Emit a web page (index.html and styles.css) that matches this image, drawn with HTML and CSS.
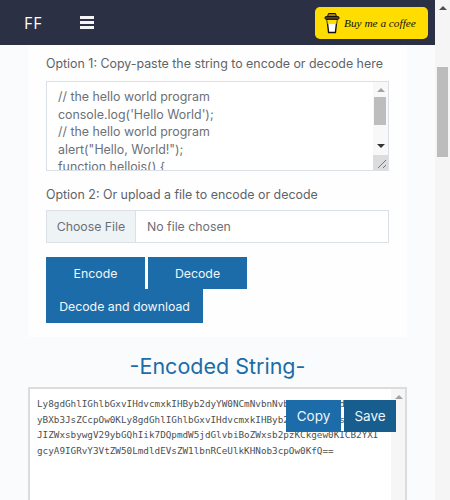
FILE: index.html
```html
<!DOCTYPE html>
<html lang="en">
<head>
  <meta charset="UTF-8" />
  <meta name="viewport" content="width=device-width, initial-scale=1">
  <title>Base64 Encode and Decode</title>
  <link rel="stylesheet" href="styles.css">
</head>
<body>
  <div class="window">
    <div class="page">
      <header>
        <div class="header-left">
          <div class="logo">FF</div>
          <div class="burger"><span></span><span></span><span></span></div>
        </div>
        <a class="coffee">
          <svg class="cup" width="16" height="22" viewBox="0 0 16 22">
            <path d="M3 7 L4.6 20.5 H11.4 L13 7 Z" fill="#fff" stroke="#111" stroke-width="1.4"/>
            <path d="M3.2 8 L3.7 12 H12.3 L12.8 8 Z" fill="#ffdd00"/>
            <rect x="1" y="4.6" width="14" height="2.6" rx="1" fill="#6b4a10" stroke="#111" stroke-width="1"/>
            <path d="M3.5 4.5 L4.5 1.5 H11.5 L12.5 4.5 Z" fill="#a8801a" stroke="#111" stroke-width="1"/>
          </svg>
          <span>Buy me a coffee</span>
        </a>
      </header>

      <section class="card">
        <label class="field-label">Option 1: Copy-paste the string to encode or decode here</label>
        <div class="input-box">
          <textarea class="source" spellcheck="false">// the hello world program
console.log('Hello World');
// the hello world program
alert("Hello, World!");
function hellois() {</textarea>
          <div class="scroll small">
            <i class="arrow up"></i>
            <b class="thumb"></b>
            <i class="arrow down"></i>
            <svg class="grip" width="15" height="15" viewBox="0 0 15 15">
              <path d="M5 13 L13 5 M10 13 L13 10" stroke="#777" fill="none"/>
            </svg>
          </div>
        </div>

        <label class="field-label second">Option 2: Or upload a file to encode or decode</label>
        <input class="file" type="file">

        <div class="actions">
          <button class="wide">Encode</button>
          <button class="wide">Decode</button>
          <button>Decode and download</button>
        </div>
      </section>

      <section class="result">
        <h2>-Encoded String-</h2>
        <div class="output">
          <div class="output-text">Ly8gdGhlIGhlbGxvIHdvcmxkIHByb2dyYW0NCmNvbnNvbGUubG9nKCdIZWxsb<br>yBXb3JsZCcpOw0KLy8gdGhlIGhlbGxvIHdvcmxkIHByb2dyYW0NCmFsZXJ0KC<br>JIZWxsbywgV29ybGQhIik7DQpmdW5jdGlvbiBoZWxsb2pzKCkgew0KICB2YXI<br>gcyA9IGRvY3VtZW50LmdldEVsZW1lbnRCeUlkKHNob3cpOw0KfQ==</div>
          <div class="scroll big"><i class="arrow up"></i></div>
          <div class="output-buttons">
            <button class="copy">Copy</button>
            <button class="save">Save</button>
          </div>
        </div>
      </section>
    </div>

    <div class="page-scroll">
      <i class="arrow up"></i>
      <b class="page-thumb"></b>
    </div>
  </div>
</body>
</html>
```
FILE: styles.css
```css
:root {
  --navy: #2b3044;
  --blue: #1b6ca8;
  --blue-dark: #175d8e;
  --text: #666a70;
  --line: #dbe0e6;
}

* {
  box-sizing: border-box;
}

html,
body {
  height: 100%;
  overflow: hidden;
}

body {
  margin: 0;
  font-family: 'Inter', 'Open Sans', sans-serif;
  background: #fafbfc;
  color: var(--text);
}

.window {
  display: flex;
  height: 500px;
}

.page {
  width: 435px;
  flex: none;
}

header {
  display: flex;
  justify-content: space-between;
  align-items: center;
  height: 45px;
  padding: 0 7px 0 24px;
  background: var(--navy);
}

.header-left {
  display: flex;
  align-items: center;
  gap: 40px;
}

.logo {
  width: 16px;
  font-family: 'Open Sans', sans-serif;
  font-size: 16px;
  font-weight: 500;
  letter-spacing: 1px;
  color: #fff;
}

.burger {
  display: flex;
  flex-direction: column;
  gap: 2.5px;
  width: 14px;
}

.burger span {
  height: 2.5px;
  background: #f4f4f4;
}

.coffee {
  display: flex;
  align-items: center;
  gap: 4px;
  width: 113px;
  height: 32px;
  margin-top: 1px;
  padding-left: 9px;
  border-radius: 5px;
  background: #ffdd00;
  color: #111;
  font-family: 'Liberation Serif', serif;
  font-style: italic;
  font-size: 11.3px;
  white-space: nowrap;
}

.card {
  margin: 0 28px;
  padding: 10px 18px 14px;
  background: #fefefe;
}

.field-label {
  display: block;
  font-size: 12.4px;
  font-weight: 400;
  line-height: 18px;
  color: #5f6368;
  white-space: nowrap;
}

.field-label.second {
  margin-top: 15px;
}

.input-box {
  position: relative;
  height: 90px;
  margin-top: 8px;
  border: 1px solid var(--line);
  background: #fff;
  overflow: hidden;
}

.source {
  display: block;
  width: 100%;
  height: 100%;
  padding: 6px 20px 0 11px;
  border: 0;
  outline: 0;
  resize: none;
  overflow: hidden;
  font-family: 'Inter', sans-serif;
  font-size: 12.4px;
  line-height: 17.6px;
  color: #6c7078;
  background: transparent;
}

.scroll {
  position: absolute;
  top: 0;
  right: 0;
  bottom: 0;
  width: 15px;
  background: #f8f8f9;
}

.arrow {
  position: absolute;
  left: 3.5px;
  width: 0;
  height: 0;
  border-left: 4px solid transparent;
  border-right: 4px solid transparent;
}

.arrow.up {
  top: 6px;
  border-bottom: 4px solid #a3a3a3;
}

.arrow.down {
  top: 62px;
  border-top: 4px solid #333;
}

.thumb {
  position: absolute;
  top: 15px;
  left: 1px;
  width: 12px;
  height: 28px;
  background: #bdbdbd;
}

.grip {
  position: absolute;
  right: 0;
  bottom: 0;
  background: #dcdcde;
}

.file {
  display: block;
  width: 100%;
  height: 33px;
  margin-top: 6px;
  padding: 0;
  border: 1px solid var(--line);
  background: #fff;
  font-family: 'Inter', sans-serif;
  font-size: 12.3px;
  color: #6c7078;
}

.file::file-selector-button {
  width: 89px;
  height: 100%;
  margin-right: 11px;
  border: 0;
  border-right: 1px solid var(--line);
  background: #eef3f6;
  font-family: inherit;
  font-size: 12.3px;
  color: #6c7078;
}

.actions {
  display: flex;
  flex-wrap: wrap;
  gap: 0 3px;
  width: 210px;
  margin-top: 14px;
}

.actions button {
  height: 34px;
  padding: 0;
  width: 157px;
  border: 0;
  background: var(--blue);
  color: #f4f7fa;
  font-family: 'Inter', sans-serif;
  font-size: 12.3px;
  font-weight: 400;
}

.actions button.wide {
  width: 99px;
  height: 32px;
}

.result {
  margin: 0 28px;
}

.result h2 {
  margin: 0;
  padding: 15px 0 6px;
  font-size: 21.5px;
  font-weight: 400;
  line-height: 29px;
  text-align: center;
  color: var(--blue);
}

.output {
  position: relative;
  height: 130px;
  border: 2px solid #dcdcdc;
  border-bottom: 0;
  background: #fff;
}

.output-text {
  padding: 7px 0 0 7px;
  font-family: 'DejaVu Sans Mono', monospace;
  font-size: 9.3px;
  line-height: 15.7px;
  color: #4d4f52;
  white-space: nowrap;
}

.scroll.big {
  width: 14px;
  background: #f6f6f6;
}

.output-buttons {
  position: absolute;
  top: 11px;
  right: 9px;
  display: flex;
  gap: 3px;
}

.output-buttons button {
  height: 32px;
  padding: 0;
  border: 0;
  color: #f1f5f9;
  font-family: 'Inter', sans-serif;
  font-size: 13.5px;
}

.copy {
  width: 55px;
  background: var(--blue);
}

.save {
  width: 52px;
  background: var(--blue-dark);
}

.page-scroll {
  position: relative;
  width: 15px;
  height: 500px;
  background: #f5f5f6;
}

.page-scroll .arrow.up {
  top: 6px;
  border-bottom-color: #505050;
}

.page-thumb {
  position: absolute;
  top: 67px;
  left: 2px;
  width: 11px;
  height: 90px;
  background: #bcbcbc;
}
```
